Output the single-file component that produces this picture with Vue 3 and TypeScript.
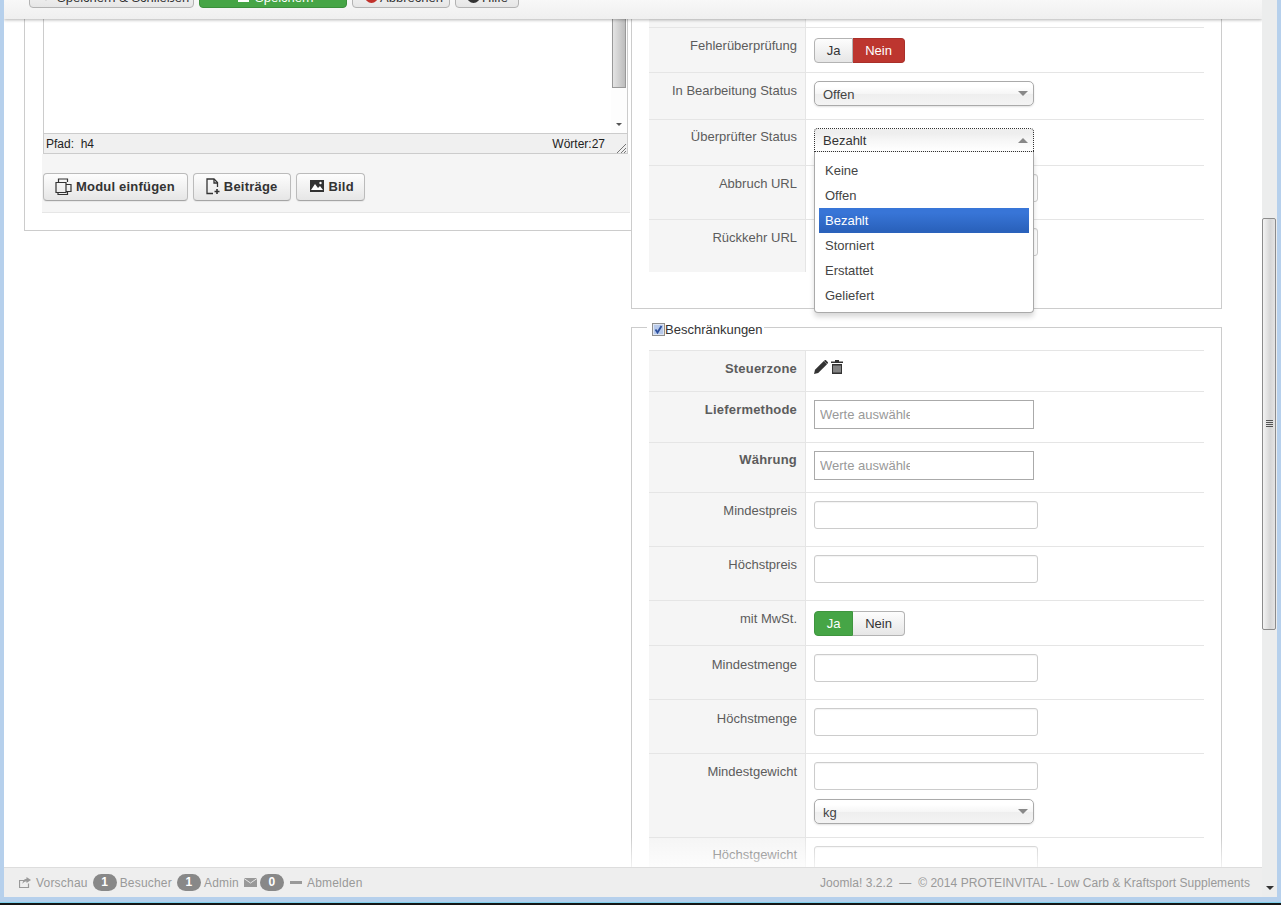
<script setup lang="ts">
type Row = { label: string; kind: 'input' | 'inputLast' | 'tags' | 'toggleNo' | 'toggleYes' | 'select' | 'selectOpen' | 'icons' | 'weight'; bold?: boolean; tall?: boolean; value?: string; nudge?: 'lift' | 'drop' }

const statusOptions: string[] = ['Keine', 'Offen', 'Bezahlt', 'Storniert', 'Erstattet', 'Geliefert']

const paymentRows: Row[] = [
  { label: 'Fehlerüberprüfung', kind: 'toggleNo' },
  { label: 'In Bearbeitung Status', kind: 'select', value: 'Offen' },
  { label: 'Überprüfter Status', kind: 'selectOpen', value: 'Bezahlt', nudge: 'lift' },
  { label: 'Abbruch URL', kind: 'input' },
  { label: 'Rückkehr URL', kind: 'inputLast' },
]

const limitRows: Row[] = [
  { label: 'Steuerzone', kind: 'icons', bold: true },
  { label: 'Liefermethode', kind: 'tags', bold: true, tall: true },
  { label: 'Währung', kind: 'tags', bold: true, nudge: 'lift' },
  { label: 'Mindestpreis', kind: 'input' },
  { label: 'Höchstpreis', kind: 'input' },
  { label: 'mit MwSt.', kind: 'toggleYes' },
  { label: 'Mindestmenge', kind: 'input', nudge: 'drop' },
  { label: 'Höchstmenge', kind: 'input', nudge: 'drop' },
  { label: 'Mindestgewicht', kind: 'weight' },
  { label: 'Höchstgewicht', kind: 'input', nudge: 'lift' },
]
</script>

<template>
  <div class="window">
    <div class="frame">
      <div class="viewport">
        <main class="page">
          <section class="col-left">
            <div class="left-set">
              <div class="editor">
                <div class="editor-body">
                  <div class="editor-area"></div>
                  <div class="editor-scroll">
                    <div class="editor-thumb"></div>
                    <span class="editor-arrow"></span>
                  </div>
                </div>
                <div class="editor-status">
                  <span class="path">Pfad:&nbsp; h4</span>
                  <span class="words">Wörter:27</span>
                  <svg class="grip" width="11" height="10" viewBox="0 0 11 10">
                    <path d="M1 10 10 1M5 10l5-5M8 10l2-2" stroke="#777" stroke-width="1" fill="none" />
                  </svg>
                </div>
              </div>
              <div class="editor-actions">
                <button class="btn" type="button">
                  <svg class="ico-modul" width="17" height="17" viewBox="0 0 17 17" fill="none" stroke="#333" stroke-width="1.2">
                    <path d="M3.500 4V1h9v3" />
                    <path d="M1 4.500h10v10H1z" />
                    <path d="M11 6.500h5v7h-5" />
                    <path d="M3 14.500v2h9.500v-3" />
                  </svg>
                  Modul einfügen
                </button>
                <button class="btn btn-post" type="button">
                  <svg width="14" height="17" viewBox="0 0 14 17" fill="none" stroke="#333" stroke-width="1.3">
                    <path d="M7 15.500H1V1h7l3.500 3.500V9" />
                    <path d="M8 1v4h3.500" />
                    <path d="M11 11v5M8.500 13.500h5" stroke-width="1.600" />
                  </svg>
                  Beiträge
                </button>
                <button class="btn btn-pic" type="button">
                  <svg class="ico-bild" width="14" height="12" viewBox="0 0 14 12">
                    <path d="M0 0h14v12H0z" fill="#333" />
                    <path d="M1 10 5 4l3 4 2-2 3 4z" fill="#fff" />
                    <circle cx="10.500" cy="3" r="1.200" fill="#fff" />
                  </svg>
                  Bild
                </button>
              </div>
            </div>
          </section>

          <section class="col-right">
            <div class="right-set">
              <div class="stub"><div class="stub-label"></div></div>
              <div v-for="row in paymentRows" :key="row.label" class="row">
                <div class="label" :class="row.nudge">{{ row.label }}</div>
                <div class="field" :class="'f-' + row.kind">
                  <div v-if="row.kind === 'toggleNo'" class="toggle">
                    <span class="t-btn">Ja</span><span class="t-btn no">Nein</span>
                  </div>
                  <div v-else-if="row.kind === 'select'" class="select">
                    {{ row.value }}<i class="arrow"></i>
                  </div>
                  <div v-else-if="row.kind === 'selectOpen'" class="select open">
                    {{ row.value }}<i class="arrow up"></i>
                    <ul class="menu">
                      <li v-for="o in statusOptions" :key="o" :class="{ active: o === row.value }">{{ o }}</li>
                    </ul>
                  </div>
                  <input v-else class="text" type="text" />
                </div>
              </div>
            </div>

            <fieldset class="limit-set">
              <legend>
                <svg class="check" width="13" height="13" viewBox="0 0 13 13">
                  <rect x=".5" y=".5" width="12" height="12" fill="#dfe6f3" stroke="#8e8f8f" />
                  <rect x="2" y="2" width="9" height="9" fill="#b7c9ea" />
                  <path d="M3.500 6.500 5.500 9.500 9.500 3" fill="none" stroke="#2b4f9e" stroke-width="1.800" />
                </svg>Beschränkungen
              </legend>
              <div v-for="row in limitRows" :key="row.label" class="row">
                <div class="label" :class="[row.nudge, { strong: row.bold }]">{{ row.label }}</div>
                <div class="field" :class="['f-' + row.kind, { tall: row.tall }]">
                  <div v-if="row.kind === 'icons'" class="icon-pair">
                    <svg width="14" height="14" viewBox="0 0 14 14">
                      <path d="M0 14 1 9.800 9.800 1 13 4.200 4.200 13z" fill="#333" />
                      <path d="M10.600.3a1 1 0 0 1 1.400 0l1.700 1.700a1 1 0 0 1 0 1.400L13 4 10 1z" fill="#333" />
                    </svg>
                    <svg width="12" height="14" viewBox="0 0 12 14">
                      <path d="M4 0h4v1.500h4V3H0V1.500h4z" fill="#333" />
                      <path d="M1 4h10v10H1z" fill="#333" />
                      <path d="M3 5.500v7M5 5.500v7M7 5.500v7M9 5.500v7" stroke="#fff" stroke-width=".8" />
                    </svg>
                  </div>
                  <div v-else-if="row.kind === 'tags'" class="tags">
                    <input class="tag-input" type="text" placeholder="Werte auswählen" />
                  </div>
                  <div v-else-if="row.kind === 'toggleYes'" class="toggle">
                    <span class="t-btn yes">Ja</span><span class="t-btn">Nein</span>
                  </div>
                  <template v-else-if="row.kind === 'weight'">
                    <input class="text" type="text" />
                    <div class="select unit">kg<i class="arrow"></i></div>
                  </template>
                  <input v-else class="text" type="text" />
                </div>
              </div>
            </fieldset>
          </section>
        </main>

        <header class="toolbar">
          <div class="tool-inner">
            <button class="tool w1" type="button">
              <svg width="12" height="10" viewBox="0 0 12 10"><path d="M1 5l3 3 7-7" fill="none" stroke="#555" stroke-width="2" /></svg>
              Speichern &amp; Schließen
            </button>
            <button class="tool w2 green" type="button">
              <svg width="11" height="12" viewBox="0 0 11 12"><path d="M0 0h11v12H0z" fill="#fff" /></svg>
              Speichern
            </button>
            <button class="tool w3" type="button">
              <svg width="13" height="13" viewBox="0 0 13 13"><circle cx="6.500" cy="6.500" r="6.500" fill="#c0302a" /></svg>
              Abbrechen
            </button>
            <button class="tool w4" type="button">
              <svg width="13" height="13" viewBox="0 0 13 13"><circle cx="6.500" cy="6.500" r="6.500" fill="#333" /></svg>
              Hilfe
            </button>
          </div>
        </header>

        <footer class="footer">
          <div class="foot-left">
            <svg width="12" height="11" viewBox="0 0 12 11">
              <path d="M.5 3.500h5M.5 3v7.500h9V6.500" fill="none" stroke="#999" stroke-width="1.200" />
              <path d="M7.500 0 12 3 7.500 6V4.500C6 4.500 4.500 5 3.500 7 3.500 4 5 2 7.500 1.800z" fill="#999" />
            </svg>
            <span>Vorschau</span>
            <span class="badge">1</span>
            <span>Besucher</span>
            <span class="badge">1</span>
            <span>Admin</span>
            <svg class="mail" width="13" height="9" viewBox="0 0 13 9">
              <path d="M0 0h13v9H0z" fill="#999" />
              <path d="M0 .5 6.500 5 13 .5" fill="none" stroke="#eee" stroke-width=".9" />
            </svg>
            <span class="badge">0</span>
            <span class="dash"></span>
            <span>Abmelden</span>
          </div>
          <div class="foot-right">Joomla! 3.2.2 &nbsp;—&nbsp; © 2014 PROTEINVITAL - Low Carb &amp; Kraftsport Supplements</div>
        </footer>
      </div>

      <aside class="scrollbar">
        <div class="thumb"><span class="thumb-grip"></span></div>
        <span class="down"></span>
      </aside>
    </div>
  </div>
</template>

<style scoped>
.window {
  box-sizing: border-box;
  height: 905px;
  width: 1281px;
  border-bottom: 2px solid #161616;
  font-family: "Liberation Sans", Arial, sans-serif;
  font-size: 13px;
  color: #333;
}
.frame {
  box-sizing: border-box;
  height: 903px;
  display: flex;
  padding: 0 4px 5px;
  background: #b6d0ec;
  border-bottom: 1px solid #7fd0ec;
}
.viewport {
  position: relative;
  width: 1258px;
  height: 897px;
  overflow: hidden;
  background: #fff;
}
.page {
  display: flex;
  align-items: flex-start;
  padding-left: 20px;
}
.col-left {
  width: 607px;
  flex: none;
}
.left-set {
  box-sizing: border-box;
  height: 231px;
  border-left: 1px solid #ccc;
  border-bottom: 1px solid #ccc;
  padding-left: 18px;
}
.editor {
  width: 585px;
}
.editor-body {
  display: flex;
  height: 133px;
  box-sizing: border-box;
  border-left: 1px solid #ccc;
  border-right: 1px solid #ccc;
}
.editor-area {
  flex: 1;
}
.editor-scroll {
  position: relative;
  width: 16px;
  background: #fdfdfd;
}
.editor-thumb {
  box-sizing: border-box;
  width: 14px;
  margin-left: 1px;
  height: 88px;
  background: linear-gradient(90deg, #e4e4e4, #bdbdbd);
  border: 1px solid #999;
  border-top: 0;
}
.editor-arrow {
  position: absolute;
  left: 5px;
  bottom: 7px;
  border: 3px solid transparent;
  border-top-color: #555;
  border-bottom: 0;
}
.editor-status {
  position: relative;
  box-sizing: border-box;
  height: 21px;
  display: flex;
  align-items: center;
  justify-content: space-between;
  padding: 0 22px 0 2px;
  background: #f0f0f0;
  border: 1px solid #ccc;
  font-size: 12px;
  color: #222;
}
.grip {
  position: absolute;
  right: 0;
  bottom: 0;
}
.editor-actions {
  box-sizing: border-box;
  width: 588px;
  height: 59px;
  margin-left: -1px;
  padding: 19px 1px 0;
  display: flex;
  gap: 5px;
  background: #f5f5f5;
  border-bottom: 1px solid #e6e6e6;
}
.btn {
  box-sizing: border-box;
  height: 28px;
  padding: 0 12px 2px;
  display: inline-flex;
  align-items: center;
  gap: 4px;
  font: bold 13px "Liberation Sans", Arial, sans-serif;
  letter-spacing: .2px;
  color: #333;
  background: linear-gradient(#fdfdfd, #e6e6e6);
  border: 1px solid #bbb;
  border-bottom-color: #a5a5a5;
  border-radius: 4px;
  box-shadow: 0 1px 1px rgba(0, 0, 0, .06);
}
.btn-post {
  padding-right: 13px;
}
.btn-pic {
  padding-right: 10px;
}
.ico-modul {
  margin-left: -1px;
}
.ico-bild {
  margin-left: 1px;
}
.col-right {
  width: 591px;
  flex: none;
}
.right-set {
  box-sizing: border-box;
  height: 309px;
  border: 1px solid #ccc;
  border-top: 0;
  padding: 0 17px;
}
.stub {
  height: 27px;
}
.stub-label {
  box-sizing: border-box;
  width: 157px;
  height: 27px;
  background: #f5f5f5;
  border-right: 1px solid #e5e5e5;
}
.limit-set {
  box-sizing: border-box;
  margin: 9px 0 0;
  padding: 0 17px;
  min-width: 0;
  border: 1px solid #ccc;
}
legend {
  box-sizing: border-box;
  margin-left: -2px;
  padding: 4px 1px 0 5px;
  height: 19px;
  line-height: 15px;
  color: #333;
  display: flex;
  align-items: center;
}
.check {
  flex: none;
}
.limit-set .row:first-of-type {
  margin-top: 13px;
}
.row {
  display: flex;
  width: 555px;
  border-top: 1px solid #e5e5e5;
}
.label {
  box-sizing: border-box;
  flex: none;
  width: 157px;
  padding: 9px 8px 0 0;
  line-height: 18px;
  text-align: right;
  color: #5c5c5c;
  background: #f5f5f5;
  border-right: 1px solid #e5e5e5;
}
.label.lift {
  padding-top: 8px;
}
.label.drop {
  padding-top: 10px;
}
.label.strong {
  font-weight: bold;
  letter-spacing: .2px;
}
.field {
  flex: 1;
  padding: 8px 0 17px 8px;
}
.f-inputLast {
  padding-bottom: 16px;
}
.f-toggleNo,
.f-toggleYes {
  padding: 10px 0 9px 8px;
}
.f-select {
  padding-bottom: 13px;
}
.f-selectOpen {
  padding-bottom: 13px;
}
.f-tags {
  padding-bottom: 12px;
}
.f-tags.tall {
  padding-bottom: 13px;
}
.f-icons {
  padding: 9px 0 17px 8px;
}
.f-weight {
  padding-bottom: 13px;
}
.text {
  display: block;
  box-sizing: border-box;
  width: 224px;
  height: 28px;
  padding: 0 6px;
  background: #fff;
  border: 1px solid #ccc;
  border-radius: 3px;
  box-shadow: inset 0 1px 1px rgba(0, 0, 0, .05);
  outline: 0;
}
.toggle {
  display: flex;
  width: 91px;
  height: 25px;
  line-height: 23px;
  text-align: center;
}
.t-btn {
  box-sizing: border-box;
  flex: 1;
  color: #333;
  background: linear-gradient(#fdfdfd, #e6e6e6);
  border: 1px solid #b3b3b3;
}
.t-btn:first-child {
  flex: none;
  width: 39px;
  border-radius: 4px 0 0 4px;
}
.t-btn:last-child {
  border-left: 0;
  border-radius: 0 4px 4px 0;
}
.t-btn.no {
  color: #fff;
  background: #bd362f;
  border-color: #a92f29;
}
.t-btn.yes {
  color: #fff;
  background: #46a546;
  border-color: #3f953f;
}
.select {
  position: relative;
  box-sizing: border-box;
  width: 220px;
  height: 25px;
  padding-left: 8px;
  line-height: 25px;
  color: #444;
  background: linear-gradient(#fff 20%, #f6f6f6 50%, #eee 52%, #f4f4f4 100%);
  border: 1px solid #aaa;
  border-radius: 5px;
  box-shadow: 0 1px 2px rgba(0, 0, 0, .12);
}
.select.open {
  height: 24px;
  background: linear-gradient(#eee 20%, #f6f6f6 50%, #fff 100%);
  border: 1px dotted #333;
  border-radius: 4px 4px 0 0;
  box-shadow: none;
  line-height: 24px;
  color: #333;
}
.select.unit {
  margin-top: 9px;
}
.arrow {
  position: absolute;
  right: 5px;
  top: 9px;
  border: 5px solid transparent;
  border-top: 5px solid #888;
  border-bottom: 0;
}
.arrow.up {
  border-top: 0;
  border-bottom: 5px solid #888;
}
.menu {
  position: absolute;
  z-index: 3;
  left: -1px;
  right: -1px;
  top: 23px;
  margin: 0;
  padding: 6px 4px 4px;
  list-style: none;
  background: #fff;
  border: 1px solid #aaa;
  border-top: 0;
  border-radius: 0 0 4px 4px;
  box-shadow: 0 4px 5px rgba(0, 0, 0, .15);
}
.menu li {
  height: 25px;
  line-height: 25px;
  padding-left: 6px;
  color: #444;
}
.menu li.active {
  color: #fff;
  background: linear-gradient(#3875d7 20%, #2a62bc 90%);
}
.tags {
  box-sizing: border-box;
  width: 220px;
  height: 29px;
  padding-left: 5px;
  display: flex;
  align-items: center;
  background: #fff;
  border: 1px solid #aaa;
}
.tag-input {
  width: 90px;
  padding: 0;
  border: 0;
  outline: 0;
  font: 13px "Liberation Sans", Arial, sans-serif;
  background: transparent;
}
.tag-input::placeholder {
  color: #999;
  opacity: 1;
}
.icon-pair {
  display: flex;
  gap: 3px;
  height: 14px;
}
.toolbar {
  position: absolute;
  top: 0;
  left: 0;
  right: 0;
  height: 19px;
  background: linear-gradient(#f8f8f8, #efefef);
  box-shadow: 0 1px 3px rgba(0, 0, 0, .3);
}
.tool-inner {
  box-sizing: border-box;
  height: 19px;
  padding: 0 0 11px 25px;
  overflow: hidden;
  display: flex;
  align-items: flex-end;
  gap: 5px;
}
.tool {
  box-sizing: border-box;
  flex: none;
  height: 27px;
  padding-top: 6px;
  display: flex;
  align-items: center;
  gap: 2px;
  font: 13px "Liberation Sans", Arial, sans-serif;
  white-space: nowrap;
  color: #333;
  background: linear-gradient(#fdfdfd, #e6e6e6);
  border: 1px solid #b3b3b3;
  border-radius: 4px;
}
.tool svg {
  flex: none;
  margin-top: -2px;
}
.w1 { width: 165px; padding-left: 12px; gap: 3px; }
.w2 { width: 148px; padding-left: 38px; gap: 6px; }
.w3 { width: 98px; padding-left: 12px; }
.w4 { width: 64px; padding-left: 11px; }
.tool.green {
  color: #fff;
  background: #46a546;
  border-color: #3b8f3b;
}
.footer {
  position: absolute;
  left: 0;
  right: 0;
  bottom: 0;
  box-sizing: border-box;
  height: 30px;
  padding: 0 12px 0 15px;
  display: flex;
  align-items: center;
  justify-content: space-between;
  font-size: 12px;
  color: #999;
  background: #eee;
  border-top: 1px solid #ddd;
}
.footer::before {
  content: "";
  position: absolute;
  left: 0;
  right: 0;
  top: -31px;
  height: 30px;
  background: linear-gradient(rgba(255, 255, 255, 0), rgba(255, 255, 255, .75));
}
.foot-left {
  display: flex;
  align-items: center;
  gap: 5px;
  letter-spacing: .2px;
}
.foot-right {
  letter-spacing: .04px;
}
.badge {
  width: 24px;
  height: 17px;
  line-height: 17px;
  margin-right: -2px;
  border-radius: 9px;
  text-align: center;
  color: #fff;
  font-weight: bold;
  background: #888;
}
.mail {
  margin-right: -2px;
}
.dash {
  width: 12px;
  height: 3px;
  margin-left: 3px;
  background: #999;
}
.scrollbar {
  position: relative;
  box-sizing: border-box;
  width: 15px;
  height: 897px;
  padding-top: 218px;
  background: #eceded;
}
.thumb {
  position: relative;
  box-sizing: border-box;
  width: 14px;
  height: 412px;
  background: linear-gradient(90deg, #f4f4f4, #d6d6d6 60%, #e4e4e4);
  border: 1px solid #8c8c8c;
  border-radius: 2px;
}
.thumb-grip {
  position: absolute;
  left: 3px;
  top: 201px;
  width: 7px;
  height: 7px;
  background: repeating-linear-gradient(#555 0 1px, transparent 1px 2px);
}
.down {
  position: absolute;
  left: 4px;
  top: 886px;
  border: 4px solid transparent;
  border-top: 4px solid #333;
  border-bottom: 0;
}
</style>

<style>
html,
body {
  margin: 0;
  overflow: hidden;
  background: #fff;
}
</style>
